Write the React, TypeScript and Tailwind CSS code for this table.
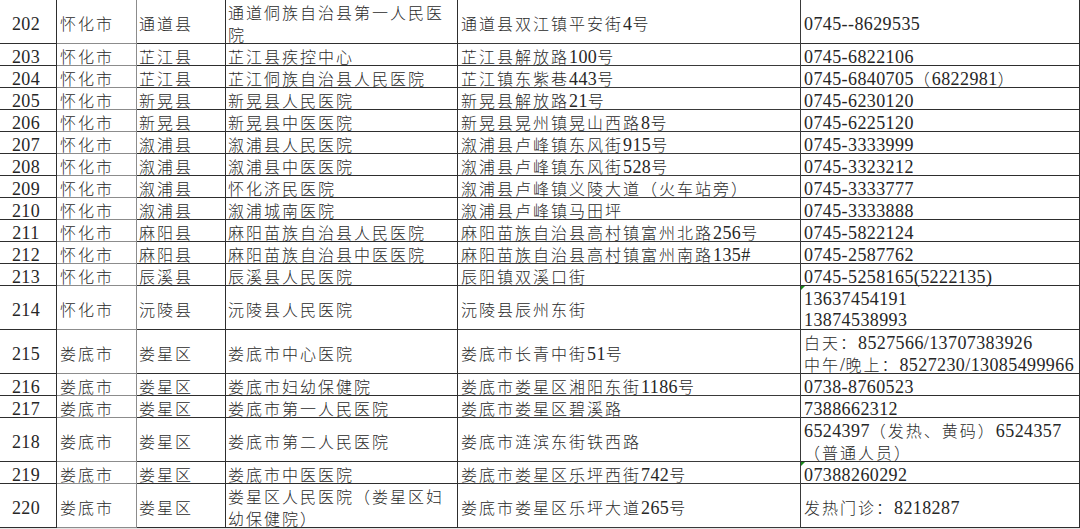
import React from "react";

type Row = {
  n: string;
  city: string;
  county: string;
  name: string[];
  addr: string[];
  tel: string[];
  tall?: boolean;
  mark?: boolean;
};

const rows: Row[] = [
  { n: "202", city: "怀化市", county: "通道县", name: ["通道侗族自治县第一人民医", "院"], addr: ["通道县双江镇平安街4号"], tel: ["0745--8629535"], tall: true },
  { n: "203", city: "怀化市", county: "芷江县", name: ["芷江县疾控中心"], addr: ["芷江县解放路100号"], tel: ["0745-6822106"] },
  { n: "204", city: "怀化市", county: "芷江县", name: ["芷江侗族自治县人民医院"], addr: ["芷江镇东紫巷443号"], tel: ["0745-6840705（6822981）"] },
  { n: "205", city: "怀化市", county: "新晃县", name: ["新晃县人民医院"], addr: ["新晃县解放路21号"], tel: ["0745-6230120"] },
  { n: "206", city: "怀化市", county: "新晃县", name: ["新晃县中医医院"], addr: ["新晃县晃州镇晃山西路8号"], tel: ["0745-6225120"] },
  { n: "207", city: "怀化市", county: "溆浦县", name: ["溆浦县人民医院"], addr: ["溆浦县卢峰镇东风街915号"], tel: ["0745-3333999"] },
  { n: "208", city: "怀化市", county: "溆浦县", name: ["溆浦县中医医院"], addr: ["溆浦县卢峰镇东风街528号"], tel: ["0745-3323212"] },
  { n: "209", city: "怀化市", county: "溆浦县", name: ["怀化济民医院"], addr: ["溆浦县卢峰镇义陵大道（火车站旁）"], tel: ["0745-3333777"] },
  { n: "210", city: "怀化市", county: "溆浦县", name: ["溆浦城南医院"], addr: ["溆浦县卢峰镇马田坪"], tel: ["0745-3333888"] },
  { n: "211", city: "怀化市", county: "麻阳县", name: ["麻阳苗族自治县人民医院"], addr: ["麻阳苗族自治县高村镇富州北路256号"], tel: ["0745-5822124"] },
  { n: "212", city: "怀化市", county: "麻阳县", name: ["麻阳苗族自治县中医医院"], addr: ["麻阳苗族自治县高村镇富州南路135#"], tel: ["0745-2587762"] },
  { n: "213", city: "怀化市", county: "辰溪县", name: ["辰溪县人民医院"], addr: ["辰阳镇双溪口街"], tel: ["0745-5258165(5222135)"] },
  { n: "214", city: "怀化市", county: "沅陵县", name: ["沅陵县人民医院"], addr: ["沅陵县辰州东街"], tel: ["13637454191", "13874538993"], tall: true, mark: true },
  { n: "215", city: "娄底市", county: "娄星区", name: ["娄底市中心医院"], addr: ["娄底市长青中街51号"], tel: ["白天：8527566/13707383926", "中午/晚上：8527230/13085499966"], tall: true },
  { n: "216", city: "娄底市", county: "娄星区", name: ["娄底市妇幼保健院"], addr: ["娄底市娄星区湘阳东街1186号"], tel: ["0738-8760523"] },
  { n: "217", city: "娄底市", county: "娄星区", name: ["娄底市第一人民医院"], addr: ["娄底市娄星区碧溪路"], tel: ["7388662312"] },
  { n: "218", city: "娄底市", county: "娄星区", name: ["娄底市第二人民医院"], addr: ["娄底市涟滨东街铁西路"], tel: ["6524397（发热、黄码）6524357", "（普通人员）"], tall: true },
  { n: "219", city: "娄底市", county: "娄星区", name: ["娄底市中医医院"], addr: ["娄底市娄星区乐坪西街742号"], tel: ["07388260292"], mark: true },
  { n: "220", city: "娄底市", county: "娄星区", name: ["娄星区人民医院（娄星区妇", "幼保健院）"], addr: ["娄底市娄星区乐坪大道265号"], tel: ["发热门诊：8218287"], tall: true },
];

const CJK = /[\u3000-\u303f\u4e00-\u9fff\uff00-\uffef]/;

function Txt({ s }: { s: string }) {
  const parts = s.match(/[\u3000-\u303f\u4e00-\u9fff\uff00-\uffef]+|[^\u3000-\u303f\u4e00-\u9fff\uff00-\uffef]+/g) || [];
  return (
    <>
      {parts.map((p, i) =>
        CJK.test(p) ? (
          <span key={i} className="text-[16px] font-light tracking-[2px] text-[#2b2b2b] [font-family:'Noto_Sans_CJK_SC',sans-serif]">
            {p}
          </span>
        ) : (
          <span key={i} className="text-[18px] tracking-[0.4px] text-[#262626] [font-family:'Liberation_Serif',serif]">
            {p}
          </span>
        )
      )}
    </>
  );
}

function Lines({ lines }: { lines: string[] }) {
  return (
    <div className="flex flex-col">
      {lines.map((l, i) => (
        <div key={i} className="whitespace-nowrap leading-[21px]">
          <Txt s={l} />
        </div>
      ))}
    </div>
  );
}

export default function App() {
  return (
    <div className="w-[1080px] h-[529px] overflow-hidden bg-white">
      <div className="grid grid-cols-[57px_80px_89px_232px_343px_279px]">
        {rows.map((r) => {
          const h = r.tall ? "h-[44px]" : "h-[22px]";
          const base = `${h} border-b border-[#2e2e2e] flex items-center pt-[5px] overflow-visible`;
          return (
            <React.Fragment key={r.n}>
              <div className={`${base} border-r border-[#1e1e1e] justify-center pr-[4px]`}>
                <Lines lines={[r.n]} />
              </div>
              <div className={`${base} border-r border-[#8c8c8c] pl-[3px]`}>
                <Lines lines={[r.city]} />
              </div>
              <div className={`${base} border-r border-[#1e1e1e] pl-[2px]`}>
                <Lines lines={[r.county]} />
              </div>
              <div className={`${base} border-r border-[#2a2a2a] pl-[2px]`}>
                <Lines lines={r.name} />
              </div>
              <div className={`${base} border-r border-[#3a3a3a] pl-[3px]`}>
                <Lines lines={r.addr} />
              </div>
              <div className={`${base} relative border-r border-[#1e1e1e] pl-[3px]`}>
                {r.mark && (
                  <div className="absolute left-0 top-0 w-0 h-0 border-t-[4px] border-r-[4px] border-t-[#1a8a1a] border-r-transparent" />
                )}
                <Lines lines={r.tel} />
              </div>
            </React.Fragment>
          );
        })}
      </div>
      <div className="h-[2px] bg-[#e4e4e4]" />
    </div>
  );
}
